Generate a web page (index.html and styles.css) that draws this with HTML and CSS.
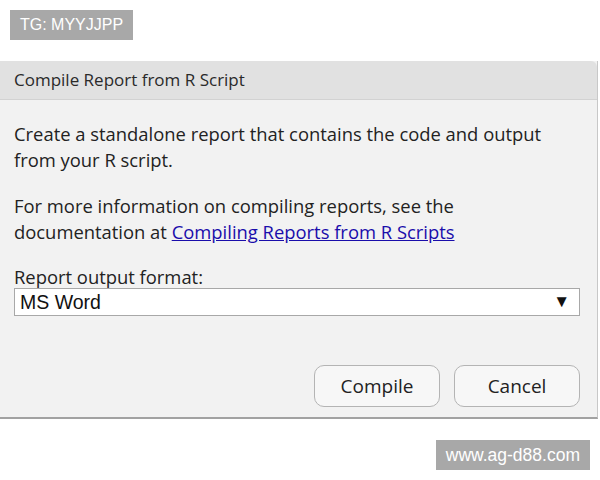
FILE: index.html
```html
<!DOCTYPE html>
<html lang="en">
<head>
  <meta charset="UTF-8">
  <title>Compile Report from R Script</title>
  <link rel="stylesheet" href="styles.css">
</head>
<body>
  <div class="tag tag-top">TG: MYYJJPP</div>

  <div class="dialog">
    <div class="dialog-title">Compile Report from R Script</div>
    <div class="dialog-body">
      <p>Create a standalone report that contains the code and output from your R script.</p>
      <p>For more information on compiling reports, see the documentation at <a href="#">Compiling Reports from R Scripts</a></p>

      <label class="field-label">Report output format:</label>
      <div class="select">
        <span>MS Word</span>
        <span class="arrow">&#9660;</span>
      </div>

      <div class="actions">
        <button class="btn">Compile</button>
        <button class="btn">Cancel</button>
      </div>
    </div>
  </div>

  <div class="footer">
    <div class="tag tag-bottom">www.ag-d88.com</div>
  </div>
</body>
</html>
```

FILE: styles.css
```css
* {
  margin: 0;
  padding: 0;
  box-sizing: border-box;
}

body {
  background: #fff;
  font-family: 'Open Sans', 'Noto Sans', sans-serif;
  color: #222;
  width: 600px;
}

.tag {
  display: inline-block;
  background: #a8a8a8;
  color: #fff;
  font-family: 'Liberation Sans', Arial, sans-serif;
  font-size: 16px;
  line-height: 30px;
  padding: 0 10px;
}

.tag-top {
  margin: 10px 0 0 10px;
}

.tag-bottom {
  font-size: 17.5px;
}

.dialog {
  margin-top: 21px;
  width: 598px;
  border-right: 1px solid #c8c8c8;
  border-bottom: 2px solid #a2a2a2;
  background: #f2f2f2;
}

.dialog-title {
  height: 39px;
  background: #e1e1e1;
  border-bottom: 1px solid #d2d2d2;
  border-top-right-radius: 6px;
  padding-left: 14px;
  font-size: 17px;
  line-height: 38px;
  color: #2a2a2a;
}

.dialog-body {
  padding: 21px 17px 10px 14px;
}

.dialog-body p {
  font-size: 18.4px;
  line-height: 26px;
  margin-bottom: 20px;
  padding-right: 11px;
}

.dialog-body a {
  color: #1a0dab;
}

.field-label {
  display: block;
  margin-top: 21px;
  font-size: 18.4px;
  line-height: 22px;
}

.select {
  display: flex;
  justify-content: space-between;
  align-items: center;
  height: 28px;
  background: #fff;
  border: 1px solid #a8a8a8;
  padding: 0 9px 0 5px;
  font-family: 'Liberation Sans', Arial, sans-serif;
  font-size: 19.5px;
  color: #111;
}

.arrow {
  font-size: 17px;
}

.actions {
  display: flex;
  justify-content: flex-end;
  gap: 14px;
  margin-top: 49px;
}

.btn {
  width: 126px;
  height: 42px;
  background: #f7f7f7;
  border: 1px solid #b4b4b4;
  border-radius: 10px;
  font-family: inherit;
  font-size: 19px;
  color: #222;
}

.footer {
  display: flex;
  justify-content: flex-end;
  padding: 21px 10px 0 0;
}
```
